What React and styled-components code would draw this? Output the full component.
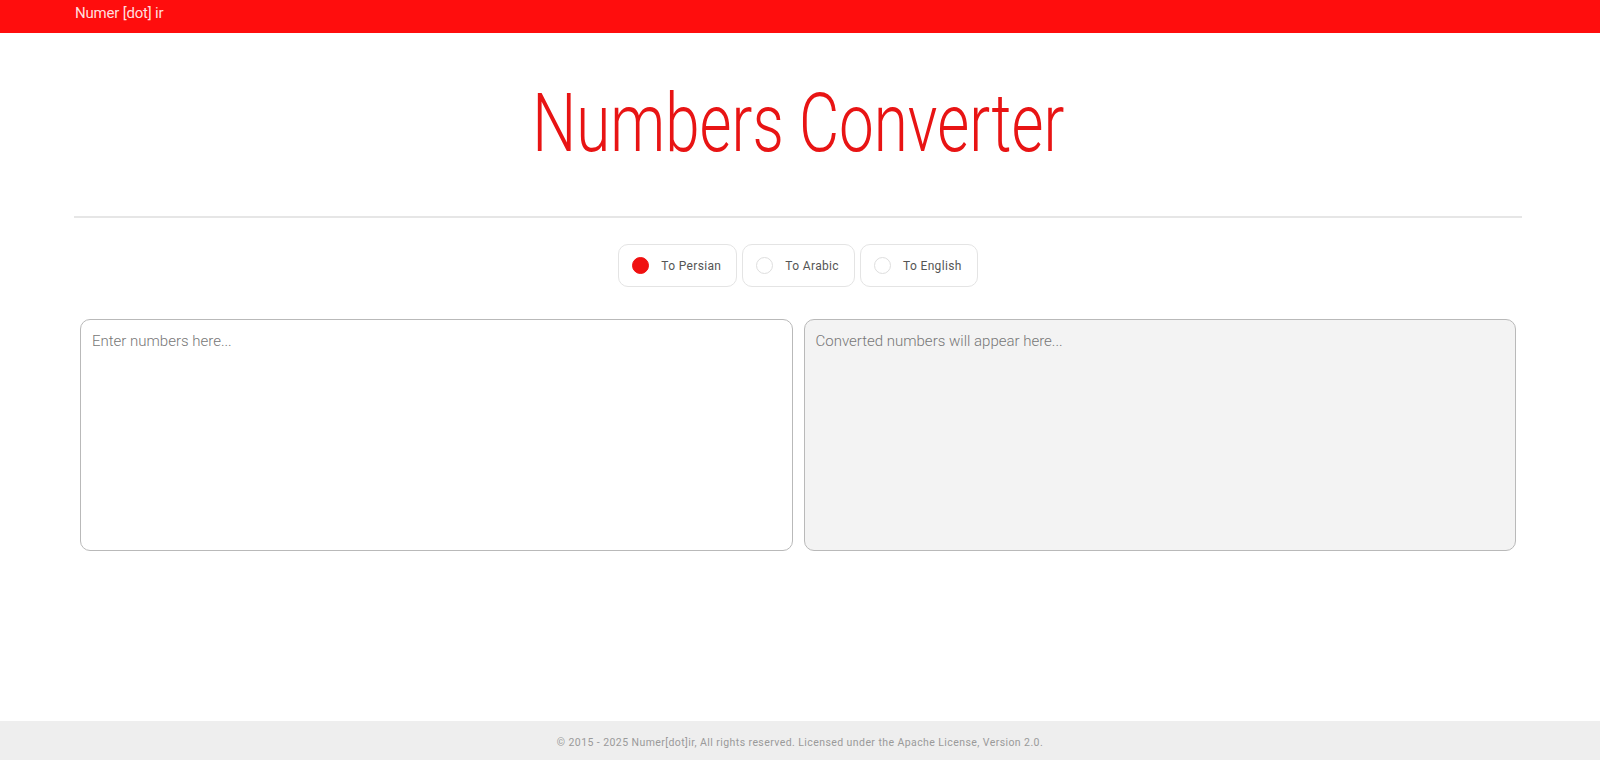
import React, { useState } from "react";
import styled, { createGlobalStyle } from "styled-components";

const FONT = `Roboto, "Liberation Sans", sans-serif`;

const Global = createGlobalStyle`
  html, body { margin: 0; padding: 0; background: #fff; }
  body { font-family: ${FONT}; }
  * { box-sizing: border-box; }
`;

const Page = styled.div`
  min-height: 760px;
  display: flex;
  flex-direction: column;
`;

const TopBar = styled.header`
  height: 33px;
  background: #ff0d0d;
  display: flex;
  align-items: center;
  padding: 0 75px;
`;

const Brand = styled.a`
  color: #ffdede;
  font-size: 15px;
  font-weight: 400;
  text-decoration: none;
  line-height: 1;
  margin-top: -6px;
  letter-spacing: -0.2px;
`;

const Main = styled.main`
  padding: 0 78px 0 74px;
  display: flex;
  flex-direction: column;
`;

const Title = styled.h1`
  margin: 50px 0 0;
  font-family: ${FONT};
  font-weight: 300;
  font-size: 82px;
  line-height: 80px;
  color: #e81414;
  text-align: center;
`;

const TitleText = styled.span`
  display: inline-block;
  transform: scaleX(0.755);
  transform-origin: center;
`;

const Divider = styled.hr`
  margin: 53px 0 0;
  border: 0;
  border-top: 2px solid #e6e6e6;
  height: 0;
`;

const Options = styled.div`
  display: flex;
  justify-content: center;
  gap: 5px;
  margin-top: 26px;
`;

const Option = styled.label`
  display: flex;
  align-items: center;
  gap: 12px;
  height: 43px;
  padding: 0 15px 0 13px;
  border: 1px solid #e4e4e4;
  border-radius: 10px;
  cursor: pointer;
  font-size: 12px;
  letter-spacing: 0.35px;
  color: #555;
`;

const Dot = styled.span`
  width: 17px;
  height: 17px;
  border-radius: 50%;
  background: ${(p) => (p.$on ? "#f01010" : "#fff")};
  border: 1px solid ${(p) => (p.$on ? "#f01010" : "#dedede")};
  flex: none;
`;

const HiddenRadio = styled.input`
  display: none;
`;

const Panes = styled.div`
  display: grid;
  grid-template-columns: 1fr 1fr;
  gap: 11px;
  margin-top: 32px;
  padding: 0 6px;
`;

const Area = styled.textarea`
  height: 232px;
  resize: none;
  border: 1px solid #b9b9b9;
  border-radius: 10px;
  padding: 12px 11px;
  font-family: ${FONT};
  font-size: 15px;
  font-weight: 300;
  color: #333;
  background: ${(p) => (p.readOnly ? "#f3f3f3" : "#fff")};
  outline: none;
  &::placeholder { color: #777; }
`;

const Footer = styled.footer`
  margin-top: auto;
  height: 39px;
  padding-top: 3px;
  background: #eeeeee;
  display: flex;
  align-items: center;
  justify-content: center;
  font-size: 10.5px;
  letter-spacing: 0.42px;
  color: #9a9a9a;
`;

const OPTIONS = [
  { id: "fa", label: "To Persian" },
  { id: "ar", label: "To Arabic" },
  { id: "en", label: "To English" },
];

export default function App() {
  const [mode, setMode] = useState("fa");
  return (
    <Page>
      <Global />
      <TopBar>
        <Brand href="#">Numer [dot] ir</Brand>
      </TopBar>
      <Main>
        <Title>
          <TitleText>Numbers Converter</TitleText>
        </Title>
        <Divider />
        <Options>
          {OPTIONS.map((o) => (
            <Option key={o.id}>
              <HiddenRadio
                type="radio"
                name="mode"
                checked={mode === o.id}
                onChange={() => setMode(o.id)}
              />
              <Dot $on={mode === o.id} />
              {o.label}
            </Option>
          ))}
        </Options>
        <Panes>
          <Area placeholder="Enter numbers here..." />
          <Area readOnly placeholder="Converted numbers will appear here..." />
        </Panes>
      </Main>
      <Footer>
        © 2015 - 2025 Numer[dot]ir, All rights reserved. Licensed under the Apache License, Version 2.0.
      </Footer>
    </Page>
  );
}
